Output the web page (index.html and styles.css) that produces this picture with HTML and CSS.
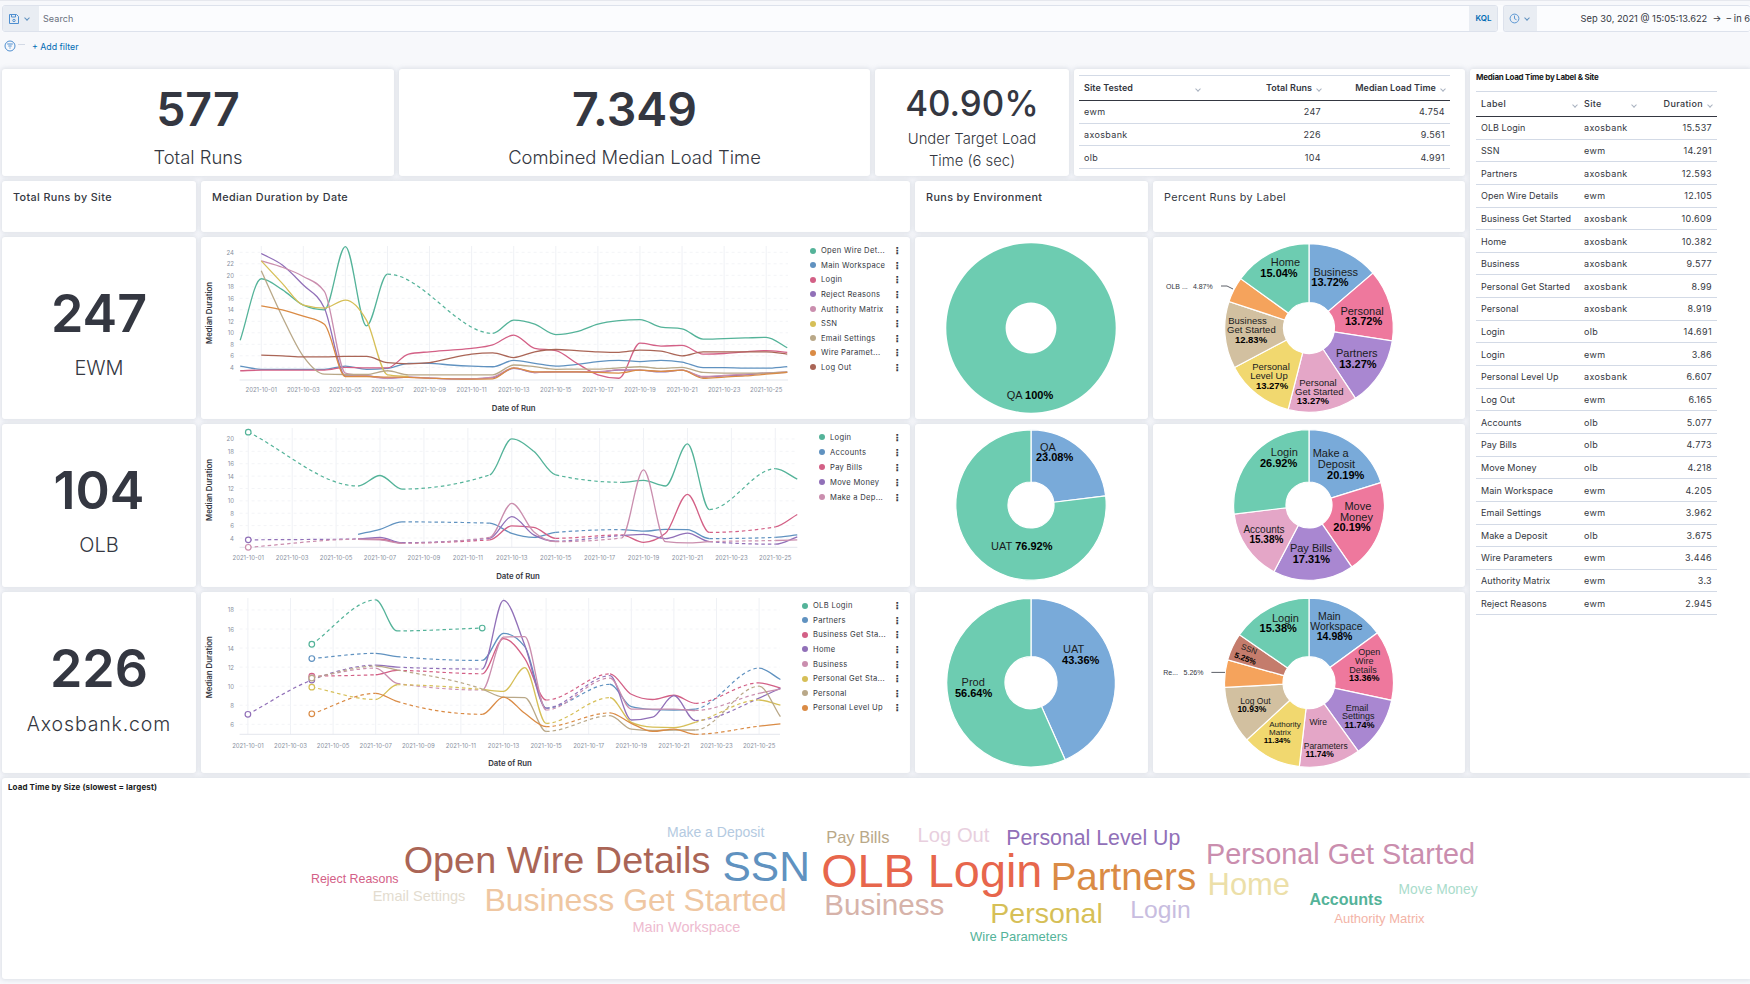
FILE: index.html
```html
<!DOCTYPE html>
<html lang="en">
<head>
  <meta charset="UTF-8" />
  <title>Load Time Dashboard</title>
  <link rel="stylesheet" href="styles.css">
</head>
<body>
  <div class="query-bar">
    <div class="search">
      <span class="prepend">
        <svg width="12" height="12" viewBox="0 0 12 12" class="blue-icon"><path d="M1.5 1.5h7l2 2v7h-9z"/><path d="M3.5 1.5v2.5h4v-2.5"/><circle cx="6" cy="7.5" r="1.2"/></svg>
        <i class="chev"></i>
      </span>
      <span class="search-input">Search</span>
      <span class="kql">KQL</span>
    </div>
    <div class="time">
      <span class="prepend prepend-time">
        <svg width="11" height="11" viewBox="0 0 12 12" class="blue-icon"><circle cx="6" cy="6" r="4.8"/><path d="M6 2.8v3.4l2.2 1.2"/></svg>
        <i class="chev"></i>
      </span>
      <span class="time-range">Sep 30, 2021 @ 15:05:13.622 &nbsp;&rarr;&nbsp; &ndash; in 6</span>
    </div>
  </div>
  <div class="filter-bar">
    <svg width="12" height="12" viewBox="0 0 12 12" class="blue-icon filter-icon"><circle cx="6" cy="6" r="5"/><path d="M3.2 4h5.6M4.3 6h3.4M5.4 8h1.2"/></svg>
    <span class="filter-dash"></span>
    <a class="add-filter">+ Add filter</a>
  </div>

  <div class="dash">
    <div class="left-col">
      <div class="row row-top">
        <div class="card metric w-577"><div class="metric-value">577</div><div class="metric-label">Total Runs</div></div>
        <div class="card metric w-median"><div class="metric-value">7.349</div><div class="metric-label">Combined Median Load Time</div></div>
        <div class="card metric w-target"><div class="metric-value small">40.90%</div><div class="metric-label small">Under Target Load<br>Time (6 sec)</div></div>
        <div class="card w-sites">
          <table class="data sites">
            <colgroup><col class="c1"><col class="c2"><col class="c3"></colgroup>
            <thead>
              <tr><th><span class="th-fill">Site Tested</span><i class="chev grey"></i></th><th class="num">Total Runs<i class="chev grey"></i></th><th class="num">Median Load Time<i class="chev grey"></i></th></tr>
            </thead>
            <tbody>
              <tr><td>ewm</td><td class="num">247</td><td class="num">4.754</td></tr>
              <tr><td>axosbank</td><td class="num">226</td><td class="num">9.561</td></tr>
              <tr><td>olb</td><td class="num">104</td><td class="num">4.991</td></tr>
            </tbody>
          </table>
        </div>
      </div>

      <div class="row row-titles">
        <div class="card title-card col-site">Total Runs by Site</div>
        <div class="card title-card col-line">Median Duration by Date</div>
        <div class="card title-card col-env">Runs by Environment</div>
        <div class="card title-card col-label light">Percent Runs by Label</div>
      </div>

      <div class="row row-a">
        <div class="card metric col-site"><div class="site-value">247</div><div class="site-name">EWM</div></div>
        <div class="card chart col-line"><svg id="lineA"></svg><ul class="legend legend-a" id="legendA"></ul></div>
        <div class="card col-env"><svg id="envA"></svg></div>
        <div class="card col-label"><svg id="labelA"></svg></div>
      </div>

      <div class="row row-b">
        <div class="card metric col-site"><div class="site-value">104</div><div class="site-name">OLB</div></div>
        <div class="card chart col-line"><svg id="lineB"></svg><ul class="legend legend-b" id="legendB"></ul></div>
        <div class="card col-env"><svg id="envB"></svg></div>
        <div class="card col-label"><svg id="labelB"></svg></div>
      </div>

      <div class="row row-c">
        <div class="card metric col-site"><div class="site-value">226</div><div class="site-name">Axosbank.com</div></div>
        <div class="card chart col-line"><svg id="lineC"></svg><ul class="legend legend-c" id="legendC"></ul></div>
        <div class="card col-env"><svg id="envC"></svg></div>
        <div class="card col-label"><svg id="labelC"></svg></div>
      </div>
    </div>

    <div class="card right-panel">
      <div class="panel-title">Median Load Time by Label &amp; Site</div>
      <table class="data labels">
        <colgroup><col class="c1"><col class="c2"><col class="c3"></colgroup>
        <thead>
          <tr><th><span class="th-fill">Label</span><i class="chev grey"></i></th><th><span class="th-fill">Site</span><i class="chev grey"></i></th><th class="num">Duration<i class="chev grey"></i></th></tr>
        </thead>
        <tbody>
          <tr><td>OLB Login</td><td>axosbank</td><td class="num">15.537</td></tr>
          <tr><td>SSN</td><td>ewm</td><td class="num">14.291</td></tr>
          <tr><td>Partners</td><td>axosbank</td><td class="num">12.593</td></tr>
          <tr><td>Open Wire Details</td><td>ewm</td><td class="num">12.105</td></tr>
          <tr><td>Business Get Started</td><td>axosbank</td><td class="num">10.609</td></tr>
          <tr><td>Home</td><td>axosbank</td><td class="num">10.382</td></tr>
          <tr><td>Business</td><td>axosbank</td><td class="num">9.577</td></tr>
          <tr><td>Personal Get Started</td><td>axosbank</td><td class="num">8.99</td></tr>
          <tr><td>Personal</td><td>axosbank</td><td class="num">8.919</td></tr>
          <tr><td>Login</td><td>olb</td><td class="num">14.691</td></tr>
          <tr><td>Login</td><td>ewm</td><td class="num">3.86</td></tr>
          <tr><td>Personal Level Up</td><td>axosbank</td><td class="num">6.607</td></tr>
          <tr><td>Log Out</td><td>ewm</td><td class="num">6.165</td></tr>
          <tr><td>Accounts</td><td>olb</td><td class="num">5.077</td></tr>
          <tr><td>Pay Bills</td><td>olb</td><td class="num">4.773</td></tr>
          <tr><td>Move Money</td><td>olb</td><td class="num">4.218</td></tr>
          <tr><td>Main Workspace</td><td>ewm</td><td class="num">4.205</td></tr>
          <tr><td>Email Settings</td><td>ewm</td><td class="num">3.962</td></tr>
          <tr><td>Make a Deposit</td><td>olb</td><td class="num">3.675</td></tr>
          <tr><td>Wire Parameters</td><td>ewm</td><td class="num">3.446</td></tr>
          <tr><td>Authority Matrix</td><td>ewm</td><td class="num">3.3</td></tr>
          <tr><td>Reject Reasons</td><td>ewm</td><td class="num">2.945</td></tr>
        </tbody>
      </table>
    </div>
  </div>

  <div class="card cloud">
    <div class="cloud-title">Load Time by Size (slowest = largest)</div>
    <svg id="cloud"></svg>
  </div>

  <script src="charts.js"></script>
</body>
</html>
```

FILE: styles.css
```css
* { box-sizing: border-box; }

html, body {
  margin: 0;
  height: 984px;
  overflow: hidden;
}

body {
  font-family: Inter, "Liberation Sans", sans-serif;
  background: #f7f8fb;
  color: #343741;
  border-top: 1px solid #e6e8ee;
}

.query-bar {
  display: flex;
  gap: 5px;
  height: 27px;
  margin: 4px 0 0 2px;
  background: #fbfcfe;
}

.search, .time {
  display: flex;
  align-items: center;
  height: 27px;
  background: #fbfcfe;
  border: 1px solid #dde2ec;
  border-radius: 3px;
  overflow: hidden;
}

.search { width: 1496px; }
.time { flex: 1; border-right: 0; }

.prepend {
  display: flex;
  align-items: center;
  gap: 5px;
  width: 36px;
  height: 100%;
  padding-left: 5px;
  background: #e9edf3;
}

.prepend-time { width: 33px; }

.blue-icon {
  fill: none;
  stroke: #4f8fd0;
  stroke-width: 1;
}

.chev {
  display: inline-block;
  width: 4px;
  height: 4px;
  margin-top: -2px;
  border-right: 1px solid #6092c0;
  border-bottom: 1px solid #6092c0;
  transform: rotate(45deg);
}

.chev.grey {
  border-color: #a9b2c0;
  margin-left: 5px;
  flex: none;
}

.search-input {
  flex: 1;
  padding-left: 4px;
  font-size: 9px;
  letter-spacing: .1px;
  color: #69707d;
}

.kql {
  width: 28px;
  height: 100%;
  padding-left: 1px;
  background: #e9edf3;
  color: #006bb4;
  font-size: 8px;
  font-weight: 600;
  line-height: 25px;
  text-align: center;
}

.time-range {
  margin-left: 44px;
  font-size: 9.3px;
  white-space: nowrap;
  color: #343741;
}

.filter-bar {
  display: flex;
  align-items: center;
  height: 37px;
  padding: 0 0 9px 4px;
}

.filter-dash {
  width: 7px;
  height: 1px;
  margin: 0 0 3px 2px;
  background: #d3dae6;
}

.add-filter {
  margin-left: 7px;
  font-size: 8.8px;
  color: #006bb4;
}

.dash {
  display: flex;
  gap: 5px;
  padding-left: 2px;
}

.left-col {
  display: flex;
  flex-direction: column;
  gap: 5px;
  width: 1463px;
}

.row { display: flex; gap: 5px; }
.row-top { height: 107px; }
.row-titles { height: 51px; }
.row-a { height: 182px; }
.row-b { height: 163px; }
.row-c { height: 181px; }

.card {
  background: #fff;
  border-radius: 3px;
  box-shadow: 0 0 4px 1px rgba(152, 162, 179, .28);
}

.w-577 { width: 392px; }
.w-median { width: 471px; }
.w-target { width: 194px; }
.w-sites { width: 391px; padding: 6px 15px 0 5px; }

.col-site { width: 194px; }
.col-line { width: 709px; }
.col-env { width: 233px; }
.col-label { width: 312px; }

.metric {
  display: flex;
  flex-direction: column;
  align-items: center;
  text-align: center;
}

.metric-value {
  margin-top: 12px;
  font-size: 46.5px;
  line-height: 56px;
  font-weight: 600;
}

.metric-label {
  margin-top: 9px;
  font-size: 18.4px;
  line-height: 22px;
  font-weight: 300;
}

.metric-value.small {
  margin-top: 8px;
  font-size: 34.8px;
  line-height: 52px;
  font-weight: 500;
}

.metric-label.small {
  margin-top: -1px;
  font-size: 14.8px;
  line-height: 22px;
}

.site-value {
  margin-top: 44px;
  font-size: 52px;
  line-height: 66px;
  font-weight: 600;
}

.row-b .site-value { margin-top: 34px; }
.row-c .site-value { margin-top: 44px; }

.site-name {
  margin-top: 8px;
  font-size: 20px;
  line-height: 26px;
  font-weight: 300;
}

.row-c .site-name { margin-top: 9px; letter-spacing: .85px; font-size: 19.5px; }

.title-card {
  padding: 10px 11px;
  font-size: 10.8px;
  font-weight: 500;
  letter-spacing: .38px;
  line-height: 13px;
}

.title-card.light { font-weight: 400; }

.chart { display: flex; }

svg { display: block; }

.legend {
  list-style: none;
  flex: 1;
  margin: 0;
  padding: 0 6px 0 0;
}

.legend li {
  display: flex;
  align-items: center;
  font-size: 7.6px;
  letter-spacing: .3px;
  color: #343741;
  white-space: nowrap;
}

.legend-a { padding-top: 6.4px; }
.legend-a li { height: 14.6px; }
.legend-b { padding-top: 6px; }
.legend-b li { height: 14.9px; }
.legend-c { padding-top: 6.4px; }
.legend-c li { height: 14.6px; }

.dot {
  flex: none;
  width: 6px;
  height: 6px;
  margin: 0 5px 0 2px;
  border-radius: 50%;
}

.legend-name { flex: 1; }

.menu {
  flex: none;
  width: 13px;
  font: bold 10px "DejaVu Sans", sans-serif;
  text-align: center;
  color: #343741;
}

.axis-tick { font-size: 6px; fill: #8a91a0; }
.axis-title { font-size: 7.8px; font-weight: 600; fill: #343741; }

.pie-text { font-family: "Liberation Sans", sans-serif; fill: #1a1c21; }
.pie-text .pct { font-weight: 700; fill: #000; }
.pie-out { font-family: "Liberation Sans", sans-serif; font-size: 7px; fill: #343741; }

.right-panel {
  flex: 1;
  padding: 0 0 0 6px;
  border-radius: 3px 0 0 3px;
}

.panel-title {
  height: 22px;
  padding-top: 4px;
  font-size: 8px;
  font-weight: 700;
  letter-spacing: -.25px;
  line-height: 9px;
  color: #1a1c21;
}

.data {
  table-layout: fixed;
  border-collapse: collapse;
  font-size: 9px;
  letter-spacing: .35px;
}

.data th {
  padding: 0 5px 1px;
  text-align: left;
  font-weight: 500;
  border-top: 1px solid #d3dae6;
  border-bottom: 1px solid #343741;
  white-space: nowrap;
}

.data th .th-fill { display: inline-block; }
.data td {
  padding: 0 5px;
  border-bottom: 1px solid #d3dae6;
  color: #343741;
  white-space: nowrap;
}

.data .num { text-align: right; }

.labels { width: 241px; }
.labels .c1 { width: 103px; }
.labels .c2 { width: 60px; }
.labels .c3 { width: 78px; }
.labels th { height: 25px; }
.labels td { height: 22.65px; }
.labels td:first-child { letter-spacing: .05px; }
.labels .th-fill { width: 87px; }
.labels th:nth-child(2) .th-fill { width: 43px; }

.sites { width: 371px; }
.sites .c1 { width: 123px; }
.sites .c2 { width: 124px; }
.sites .c3 { width: 124px; }
.sites th { height: 25px; padding-bottom: 2px; font-weight: 600; letter-spacing: .05px; }
.sites td { height: 22.7px; }
.sites .th-fill { width: 107px; }

.cloud {
  position: relative;
  height: 201px;
  margin: 5px 0 0 2px;
  border-radius: 3px 0 0 3px;
}

.cloud-title {
  padding: 5px 0 0 6px;
  font-size: 8px;
  font-weight: 700;
  letter-spacing: .1px;
  line-height: 9px;
  color: #1a1c21;
}

.cloud svg {
  position: absolute;
  inset: 0;
}

.word { font-family: "Liberation Sans", sans-serif; }
```

FILE: charts.js
```js
const GREEN = '#54b399', BLUE = '#6092c0', PINK = '#d36086', PURPLE = '#9170b8',
  MAUVE = '#ca8eae', YELLOW = '#d6bf57', TAN = '#b9a888', ORANGE = '#da8b45', BROWN = '#aa6556';

const _ = null;

const lineCharts = [
  {
    id: 'lineA', legend: 'legendA',
    box: [201, 237, 607, 182],
    x0: 240.2, dx: 21.04, left: 239.6, right: 788,
    yZero: 367.3, yBase: 4, yScale: 5.75, top: 246, axis: 380,
    yTicks: [4, 6, 8, 10, 12, 14, 16, 18, 20, 22, 24],
    tickY: 389, titleX: 513.7, titleY: 408, yTitleX: 209, yTitleY: 313,
    series: [
      { name: 'Open Wire Det...', color: GREEN, v: [8.7, 19.4, 17.5, 14.8, 14, 25, 11.2, 20.2, _, _, _, _, 9.9, 12.2, 11.5, 9.7, 10.2, 11.5, 12.1, 12.3, 11, 10.7, 8.9, 9, 9.1, 9.2, 7.4] },
      { name: 'Main Workspace', color: BLUE, v: [4.2, 3.65, 3.65, 3.65, 3.65, 4.2, 3.65, 3.8, 4.7, 4.7, 4.4, 4.2, 4.1, 5.2, 4.7, 4.2, 4.5, 5, 5.2, 5, 5.2, 4.9, 3.95, 3.95, 3.85, 3.85, 4.1] },
      { name: 'Login', color: PINK, v: [3.4, 3.5, 3.5, 3.5, 3.5, 4, 3.9, 3.9, 6.3, 6.7, 7, 7.3, 7.9, 9.6, 7.3, 6.9, 4.7, 2.7, 2.1, 8.2, 7.7, 7.8, 6.3, 6.4, 6.7, 6.9, 6.6] },
      { name: 'Reject Reasons', color: PURPLE, v: [_, 23.8, 21.8, 18.3, 14.3, 2.5, 2.5, 2.1, 2.3, 2.1, 2, 2, 2.2, 3.8, 3.1, 3.2, 3.2, 3.2, 3.5, 3.5, 3.2, 3.5, 2.3, 2.5, 2.7, 3, 3.1] },
      { name: 'Authority Matrix', color: MAUVE, v: [_, 22.5, 21.4, 19.8, 17.2, 3, 2.5, 2.1, 2.3, 2.1, 2, 2, 2.3, 3.9, 3.1, 3.2, 3.2, 3.2, 3.6, 3.5, 3.3, 3.5, 2.4, 2.6, 2.8, 3, 3.2] },
      { name: 'SSN', color: YELLOW, v: [_, 22.5, 18.6, 14.8, 14.3, 15.7, 12.2, 2.7, 2.4] },
      { name: 'Email Settings', color: TAN, v: [_, 20.8, 12.8, 5.9, 2.8, 2.75, 2.75, 3.4, 2.7, 2.7, 2.7, 2.7, 2.7, 4.4, 4.1, 3.65, 3.7, 3.7, 3.9, 4.1, 3.8, 4, 3.1, 3, 3, 3, 3.2] },
      { name: 'Wire Paramet...', color: ORANGE, v: [_, 14.7, 14, 12.9, 11.5, 2.4, 2.4, 2.3, 2.25, 2.1, 2, 1.95, 2, 3.9, 3.2, 3.2, 3.2, 3.1, 3, 3.5, 3.3, 3.5, 2.1, 2.3, 2.5, 2.8, 3.1] },
      { name: 'Log Out', color: BROWN, v: [_, 6.1, 6, 5.8, 5.8, 5.9, 5.9, 4.8, 4.6, 4.8, 5.6, 6.3, 6.5, 5.7, 6.7, 7.1, 6.9, 6.7, 6.6, 7, 6.8, 6, 6.7, 6.7, 6.7, 6.7, 6.3] }
    ]
  },
  {
    id: 'lineB', legend: 'legendB',
    box: [201, 424, 616, 163],
    x0: 226.3, dx: 21.96, left: 239.6, right: 797.4,
    yZero: 538, yBase: 4, yScale: 6.19, top: 428, axis: 547.3,
    yTicks: [4, 6, 8, 10, 12, 14, 16, 18, 20],
    tickY: 557.7, titleX: 518, titleY: 576, yTitleX: 209, yTitleY: 490,
    series: [
      { name: 'Login', color: GREEN, v: [_, 21.1, _, _, _, _, 12.4, 14.1, 11.9, _, _, _, 14.2, 20, 18, 14.2, _, _, 13, 13.3, 12.4, 19.2, 8.6, _, _, 15.2, 13.5] },
      { name: 'Accounts', color: BLUE, v: [_, _, _, _, _, _, 4.6, 5.4, 6.6, _, _, _, 6.4, 4.75, 4.1, 4.9, _, _, 5.35, 5.1, 5.4, 5.35, 3.9, _, _, 4.1, 4.5] },
      { name: 'Pay Bills', color: PINK, v: [_, _, _, _, _, _, 3.8, 3.8, 3.2, _, _, _, 3.7, 5.95, 5.7, 3.95, _, _, 4.5, 3.3, 4.75, 11.05, 4.9, _, _, 5.8, 7.8] },
      { name: 'Move Money', color: PURPLE, v: [_, 3.7, _, _, _, _, 3.85, 4.1, 3.25, _, _, _, 3.95, 7.45, 4.5, 3.5, _, _, 4.4, 4.6, 3.9, 4.8, 3.4, _, _, 3, 4.2] },
      { name: 'Make a Dep...', color: MAUVE, v: [_, 2.5, _, _, _, _, 3.8, 3.7, 3.15, _, _, _, 4.1, 9.6, 5, 3.4, _, _, 4, 15, 3.4, 3.2, 3.4, _, _, 3.6, 3.7] }
    ]
  },
  {
    id: 'lineC', legend: 'legendC',
    box: [201, 592, 599, 181],
    x0: 226.6, dx: 21.3, left: 239.6, right: 780,
    yZero: 724.3, yBase: 6, yScale: 9.53, top: 598, axis: 734.3,
    yTicks: [6, 8, 10, 12, 14, 16, 18],
    tickY: 745, titleX: 510, titleY: 763.3, yTitleX: 209, yTitleY: 667.3,
    series: [
      { name: 'OLB Login', color: GREEN, v: [_, _, _, _, 14.4, _, _, 19.05, 15.8, _, _, _, 16.1] },
      { name: 'Partners', color: BLUE, v: [_, _, _, _, 12.9, _, _, 13.45, 13.1, _, _, _, 12.7, 15.55, 14.15, 7.7, _, _, 10.2, 7.85, 7.55, 7.5, 7.6, _, _, 11.9, 10.7] },
      { name: 'Business Get Sta...', color: PINK, v: [_, _, _, _, 11.05, _, _, 11.2, 11.65, _, _, _, 11.3, 15, 12.9, 8.55, _, _, 11.3, 9.15, 8.6, 9.05, 8.2, _, _, 10.35, 9.8] },
      { name: 'Home', color: PURPLE, v: [_, 7.05, _, _, 10.65, _, _, 12.2, 12, _, _, _, 11.8, 19, 14.3, 7.7, _, _, 11.1, 6.45, 6.75, 9, 6.4, _, _, 8.75, 9.8] },
      { name: 'Business', color: MAUVE, v: [_, _, _, _, 10.9, _, _, 11.9, 10.3, _, _, _, 9.6, 15.15, 15.2, 7.5, _, _, 10.85, 7.6, 7.6, 7.6, 7.45, _, _, 9.25, 9.7] },
      { name: 'Personal Get Sta...', color: YELLOW, v: [_, _, _, _, 9.9, _, _, 8.6, 10.15, _, _, _, 9.65, 9.45, 11.95, 6.1, _, _, 8.8, 6.2, 5.7, 5.65, 6.2, _, _, 8.55, 8] },
      { name: 'Personal', color: TAN, v: [_, _, _, _, 10.85, _, _, 12.1, 11.7, _, _, _, 9.7, 8.85, 8.8, 5.25, _, _, 6.9, 5.5, 5.35, 5.4, 5.4, _, _, 10, 6.8] },
      { name: 'Personal Level Up', color: ORANGE, v: [_, _, _, _, 7.1, _, _, 9.25, 8.4, _, _, _, 7.05, 8.85, 7.15, 5.75, _, _, 7.2, 6.1, 5.25, 5.5, 4.95, _, _, 5.8, 6.05] }
    ]
  }
];

// pie colours follow the vis palette order
const P = { green: '#6dccb1', blue: '#79aad9', pink: '#ee789d', purple: '#a987d1', mauve: '#e4a6c7', yellow: '#f1d86f', tan: '#d2c0a0', orange: '#f5a35c', brown: '#c47c6c' };

const pies = [
  {
    id: 'envA', box: [915, 237, 233, 182], cx: 1031, cy: 328, r: 84.7, hole: 25.4,
    slices: [[100, P.green]],
    labels: [[1030, 395.3, 'QA 100%', 11]]
  },
  {
    id: 'envB', box: [915, 424, 233, 163], cx: 1031, cy: 505, r: 75.2, hole: 23,
    slices: [[23.08, P.blue], [76.92, P.green]],
    labels: [[1048, 446.7, 'QA', 11], [1054.6, 457.3, '23.08%', 11], [1021.8, 546, 'UAT 76.92%', 11]]
  },
  {
    id: 'envC', box: [915, 592, 233, 181], cx: 1031, cy: 682.7, r: 84.3, hole: 26,
    slices: [[43.36, P.blue], [56.64, P.green]],
    labels: [[1073.6, 649, 'UAT', 11], [1080.7, 660, '43.36%', 11], [973.2, 682, 'Prod', 11], [973.6, 693, '56.64%', 11]]
  },
  {
    id: 'labelA', box: [1153, 237, 312, 182], cx: 1309, cy: 328, r: 84.3, hole: 25.5,
    slices: [[13.72, P.blue], [13.72, P.pink], [13.27, P.purple], [13.27, P.mauve], [13.27, P.yellow], [12.83, P.tan], [4.87, P.orange], [15.04, P.green]],
    labels: [
      [1285.4, 262.3, 'Home', 11], [1279, 273.3, '15.04%', 11],
      [1335.7, 271.7, 'Business', 11], [1330, 282.3, '13.72%', 11],
      [1362.1, 311.3, 'Personal', 11], [1363.6, 321.3, '13.72%', 11],
      [1356.8, 353.3, 'Partners', 11], [1357.9, 364, '13.27%', 11],
      [1317.9, 382, 'Personal', 9.5], [1319.3, 391.3, 'Get Started', 9.5], [1312.9, 400.3, '13.27%', 9.5],
      [1271, 366, 'Personal', 9.5], [1269, 375.3, 'Level Up', 9.5], [1272, 384.7, '13.27%', 9.5],
      [1247.5, 320.3, 'Business', 9.5], [1251.4, 329.7, 'Get Started', 9.5], [1251, 338.7, '12.83%', 9.5]
    ],
    outside: { name: 'OLB ...', pct: '4.87%', x: 1166, px: 1192.9, y: 286, line: 'M1221 286H1227L1233 289' }
  },
  {
    id: 'labelB', box: [1153, 424, 312, 163], cx: 1309, cy: 505, r: 75.4, hole: 23,
    slices: [[20.19, P.blue], [20.19, P.pink], [17.31, P.purple], [15.38, P.mauve], [26.92, P.green]],
    labels: [
      [1284.3, 452.3, 'Login', 11], [1278.6, 463.3, '26.92%', 11],
      [1330.7, 453, 'Make a', 11], [1336.4, 464, 'Deposit', 11], [1345.7, 474.7, '20.19%', 11],
      [1357.9, 506, 'Move', 11], [1356.4, 516.7, 'Money', 11], [1352, 527.3, '20.19%', 11],
      [1311, 548.3, 'Pay Bills', 11], [1311.4, 559, '17.31%', 11],
      [1264, 529.3, 'Accounts', 10], [1266.4, 539.3, '15.38%', 10]
    ]
  },
  {
    id: 'labelC', box: [1153, 592, 312, 181], cx: 1309, cy: 682.7, r: 84.5, hole: 26,
    slices: [[14.98, P.blue], [13.36, P.pink], [11.74, P.purple], [11.74, P.mauve], [11.34, P.yellow], [10.93, P.tan], [5.26, P.orange], [5.25, P.brown], [15.38, P.green]],
    labels: [
      [1285.4, 617.7, 'Login', 11], [1278.2, 628.3, '15.38%', 11],
      [1329.3, 616.3, 'Main', 10.5], [1336.4, 626.3, 'Workspace', 10.5], [1334.6, 636.3, '14.98%', 10.5],
      [1369.3, 652, 'Open', 9], [1364.3, 661, 'Wire', 9], [1362.9, 669.7, 'Details', 9], [1364.3, 678, '13.36%', 9],
      [1357.1, 707.7, 'Email', 9], [1358.2, 716.3, 'Settings', 9], [1359.6, 724.7, '11.74%', 9],
      [1318.2, 722, 'Wire', 8.5], [1325.7, 746.3, 'Parameters', 8.5], [1319.6, 754.3, '11.74%', 8.5],
      [1285, 724.3, 'Authority', 8], [1280, 732, 'Matrix', 8], [1277.1, 740, '11.34%', 8],
      [1255.4, 701, 'Log Out', 8.5], [1251.8, 709.3, '10.93%', 8.5],
      [1249, 649.3, 'SSN', 8, 20], [1245.4, 658.3, '5.25%', 8, 20]
    ],
    outside: { name: 'Re...', pct: '5.26%', x: 1163.2, px: 1183.6, y: 672, line: 'M1211.4 672.4H1225' }
  }
];

// x, baseline y, font size, colour
const words = [
  ['Open Wire Details', 403.7, 873.3, 37.8, '#aa6556'],
  ['SSN', 722.5, 880.7, 42.5, '#6092c0'],
  ['OLB Login', 821.2, 886.7, 46.8, '#e7664c'],
  ['Partners', 1050.7, 890, 38.5, '#da8b45'],
  ['Personal Get Started', 1206, 864.3, 28.8, '#ca8eae'],
  ['Home', 1207.6, 895, 30.9, '#ecdfa9'],
  ['Business Get Started', 484.4, 911, 32, '#efc7a2'],
  ['Business', 824.2, 915, 29.6, '#d6b3aa'],
  ['Personal', 990.3, 923.3, 28.5, '#d6bf57'],
  ['Login', 1130.3, 918.3, 24.7, '#c8bde0'],
  ['Personal Level Up', 1006.3, 845, 21.3, '#9170b8'],
  ['Log Out', 917.6, 842, 20.2, '#e8cfde'],
  ['Pay Bills', 826.2, 843.3, 16.5, '#b9a888'],
  ['Make a Deposit', 667, 836.7, 14, '#b4cae1'],
  ['Reject Reasons', 311, 882.7, 12.4, '#d36086'],
  ['Email Settings', 372.7, 900.7, 14.5, '#e3dccf'],
  ['Main Workspace', 632.5, 931.7, 14.5, '#eebbcf'],
  ['Wire Parameters', 970, 940.7, 13, '#54b399'],
  ['Accounts', 1309.4, 905.3, 16, '#54b399', 'bold'],
  ['Move Money', 1398.6, 894, 13.8, '#a9dccb'],
  ['Authority Matrix', 1334.3, 922.7, 13, '#f3b3a6']
];

function setBox(svg, box) {
  svg.setAttribute('viewBox', box.join(' '));
  svg.setAttribute('width', box[2]);
  svg.setAttribute('height', box[3]);
}

// monotone-x tangents, same curve the chart lib uses
function tangents(pts) {
  const n = pts.length, m = new Array(n).fill(0);
  if (n < 2) return m;
  const h = [], s = [];
  for (let i = 0; i < n - 1; i++) {
    h[i] = pts[i + 1][0] - pts[i][0];
    s[i] = (pts[i + 1][1] - pts[i][1]) / h[i];
  }
  m[0] = s[0];
  m[n - 1] = s[n - 2];
  for (let i = 1; i < n - 1; i++) {
    const p = (s[i - 1] * h[i] + s[i] * h[i - 1]) / (h[i - 1] + h[i]);
    m[i] = (Math.sign(s[i - 1]) + Math.sign(s[i])) *
      Math.min(Math.abs(s[i - 1]), Math.abs(s[i]), 0.5 * Math.abs(p));
  }
  return m;
}

function drawLine(c) {
  const svg = document.getElementById(c.id);
  setBox(svg, c.box);
  const X = d => c.x0 + d * c.dx;
  const Y = v => c.yZero - (v - c.yBase) * c.yScale;
  let html = '';

  for (let d = 1; d <= 25; d += 2) {
    const label = '2021-10-' + String(d).padStart(2, '0');
    html += `<line x1="${X(d)}" x2="${X(d)}" y1="${c.top}" y2="${c.axis}" stroke="#eff1f5"/>`;
    html += `<text class="axis-tick" x="${X(d)}" y="${c.tickY}" text-anchor="middle" dominant-baseline="central">${label}</text>`;
  }
  c.yTicks.forEach(t => {
    html += `<line x1="${c.left}" x2="${c.right}" y1="${Y(t)}" y2="${Y(t)}" stroke="#f3f4f7" stroke-dasharray="3 3"/>`;
    html += `<text class="axis-tick" x="234" y="${Y(t)}" text-anchor="end" dominant-baseline="central">${t}</text>`;
  });
  html += `<line x1="${c.left}" x2="${c.right}" y1="${c.axis}" y2="${c.axis}" stroke="#e4e7ed"/>`;
  html += `<text class="axis-title" x="${c.titleX}" y="${c.titleY}" text-anchor="middle" dominant-baseline="central">Date of Run</text>`;
  html += `<text class="axis-title" transform="translate(${c.yTitleX} ${c.yTitleY}) rotate(-90)" text-anchor="middle" dominant-baseline="central">Median Duration</text>`;

  c.series.forEach(s => {
    const days = [];
    s.v.forEach((v, d) => { if (v !== null) days.push(d); });
    const pts = days.map(d => [X(d), Y(s.v[d])]);
    const m = tangents(pts);
    let solid = '', dashed = '';
    for (let i = 0; i < pts.length - 1; i++) {
      const t = (pts[i + 1][0] - pts[i][0]) / 3;
      const seg = `M${pts[i][0]} ${pts[i][1]}C${pts[i][0] + t} ${pts[i][1] + m[i] * t} ${pts[i + 1][0] - t} ${pts[i + 1][1] - m[i + 1] * t} ${pts[i + 1][0]} ${pts[i + 1][1]}`;
      if (days[i + 1] - days[i] === 1) solid += seg;
      else dashed += seg;
    }
    html += `<path d="${solid}" fill="none" stroke="${s.color}" stroke-width="1.3"/>`;
    html += `<path d="${dashed}" fill="none" stroke="${s.color}" stroke-width="1.2" stroke-dasharray="3.5 3"/>`;
    // a day with no neighbours gets a ring
    days.forEach((d, i) => {
      const alone = days[i - 1] !== d - 1 && days[i + 1] !== d + 1;
      if (alone) html += `<circle cx="${pts[i][0]}" cy="${pts[i][1]}" r="2.8" fill="#fff" stroke="${s.color}" stroke-width="1.2"/>`;
    });
  });
  svg.innerHTML = html;

  document.getElementById(c.legend).innerHTML = c.series.map(s =>
    `<li><span class="dot" style="background:${s.color}"></span><span class="legend-name">${s.name}</span><span class="menu">&#8942;</span></li>`
  ).join('');
}

function sector(cx, cy, r, r0, a0, a1) {
  const pt = (rad, a) => `${cx + rad * Math.sin(a)} ${cy - rad * Math.cos(a)}`;
  const big = a1 - a0 > Math.PI ? 1 : 0;
  return `M${pt(r, a0)}A${r} ${r} 0 ${big} 1 ${pt(r, a1)}L${pt(r0, a1)}A${r0} ${r0} 0 ${big} 0 ${pt(r0, a0)}Z`;
}

function drawPie(p) {
  const svg = document.getElementById(p.id);
  setBox(svg, p.box);
  let html = '', a = 0;
  const total = p.slices.reduce((sum, s) => sum + s[0], 0);
  p.slices.forEach(s => {
    let b = a + s[0] / total * Math.PI * 2;
    const full = p.slices.length === 1;
    if (full) b -= 0.0001;
    html += `<path d="${sector(p.cx, p.cy, p.r, p.hole, a, b)}" fill="${s[1]}" stroke="${full ? 'none' : '#fff'}" stroke-width="1.2"/>`;
    a = b;
  });
  p.labels.forEach(l => {
    const parts = l[2].match(/^(.*?)([\d.]+%)?$/);
    const rot = l[4] ? ` transform="rotate(${l[4]} ${l[0]} ${l[1]})"` : '';
    html += `<text class="pie-text" x="${l[0]}" y="${l[1]}" font-size="${l[3]}" text-anchor="middle" dominant-baseline="central"${rot}>${parts[1]}<tspan class="pct">${parts[2] || ''}</tspan></text>`;
  });
  if (p.outside) {
    const o = p.outside;
    html += `<text class="pie-out" x="${o.x}" y="${o.y}" dominant-baseline="central">${o.name}</text>`;
    html += `<text class="pie-out" x="${o.px}" y="${o.y}" dominant-baseline="central">${o.pct}</text>`;
    html += `<path d="${o.line}" fill="none" stroke="#343741" stroke-width=".8"/>`;
  }
  svg.innerHTML = html;
}

function drawCloud() {
  const svg = document.getElementById('cloud');
  setBox(svg, [2, 778, 1748, 201]);
  svg.innerHTML = words.map(w =>
    `<text class="word" x="${w[1]}" y="${w[2]}" font-size="${w[3]}" fill="${w[4]}"${w[5] ? ' font-weight="bold"' : ''}>${w[0]}</text>`
  ).join('');
}

lineCharts.forEach(drawLine);
pies.forEach(drawPie);
drawCloud();
```
